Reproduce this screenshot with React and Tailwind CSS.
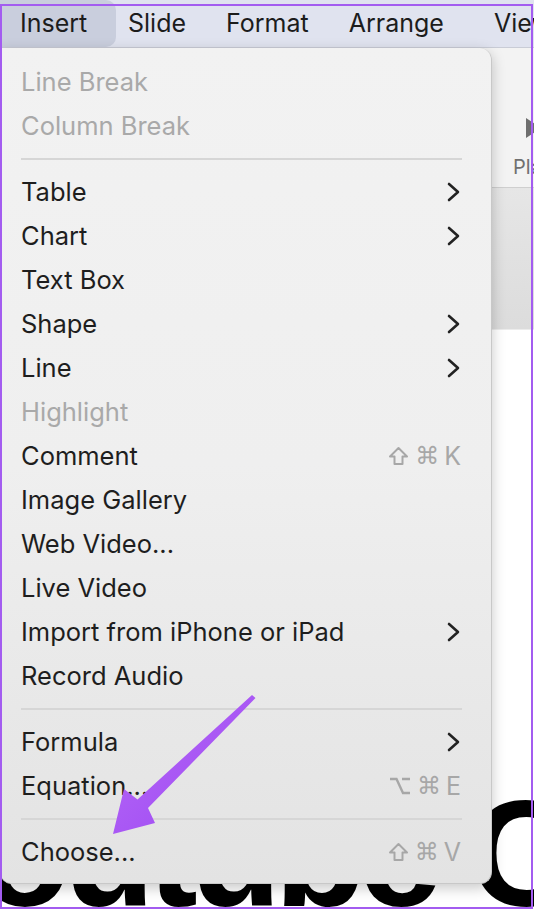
import React from 'react';

// Menu rows, top to bottom. 'sep' draws a divider.
const menuItems = [
  { label: 'Line Break', disabled: true },
  { label: 'Column Break', disabled: true },
  'sep',
  { label: 'Table', submenu: true },
  { label: 'Chart', submenu: true },
  { label: 'Text Box' },
  { label: 'Shape', submenu: true },
  { label: 'Line', submenu: true },
  { label: 'Highlight', disabled: true },
  { label: 'Comment', mod: 'shift', key: 'K' },
  { label: 'Image Gallery' },
  { label: 'Web Video...' },
  { label: 'Live Video' },
  { label: 'Import from iPhone or iPad', submenu: true },
  { label: 'Record Audio' },
  'sep',
  { label: 'Formula', submenu: true },
  { label: 'Equation...', mod: 'option', key: 'E' },
  'sep',
  { label: 'Choose...', mod: 'shift', key: 'V' },
];

const fontStack = { fontFamily: 'Inter, "Noto Sans", sans-serif' };

const Chevron = () => (
  <svg width="14" height="20" viewBox="0 0 14 20" className="shrink-0">
    <polyline points="2,2 11,10 2,18" fill="none" stroke="#222" strokeWidth="2.6" strokeLinecap="round" strokeLinejoin="round" />
  </svg>
);

const ShiftIcon = () => (
  <svg width="21" height="20" viewBox="0 0 21 20">
    <path d="M10.5 2 L19 10.5 L14.5 10.5 L14.5 18 L6.5 18 L6.5 10.5 L2 10.5 Z" fill="none" stroke="#a7a7a7" strokeWidth="2" strokeLinejoin="round" />
  </svg>
);

const OptionIcon = () => (
  <svg width="22" height="20" viewBox="0 0 22 20">
    <path d="M1 3 H7.5 L14 17 H21 M13 3 H21" fill="none" stroke="#a7a7a7" strokeWidth="2.4" />
  </svg>
);

const Shortcut = ({ mod, k }) => (
  <div className="flex items-center text-[#a7a7a7]">
    {mod === 'shift' ? <ShiftIcon /> : <OptionIcon />}
    <span className="ml-[6px] text-[24px] leading-none" style={{ fontFamily: '"DejaVu Sans", sans-serif' }}>⌘</span>
    <span className="ml-[5px] text-[25px] leading-none">{k}</span>
  </div>
);

const MenuRow = ({ item }) => (
  <div className="flex items-center justify-between h-[44px] pl-[21px] pr-[30px]">
    <span className={'text-[25.5px] leading-none ' + (item.disabled ? 'text-[#a9a9a9]' : 'text-[#1e1e1e]')}>
      {item.label}
    </span>
    {item.submenu && <Chevron />}
    {item.mod && <Shortcut mod={item.mod} k={item.key} />}
  </div>
);

const Separator = () => (
  <div className="flex items-center h-[22px] pl-[21px] pr-[29px]">
    <div className="w-full h-[2px] bg-[#d6d6d6]" />
  </div>
);

export default function App() {
  return (
    <div className="relative w-[534px] h-[910px] overflow-hidden bg-white flex flex-col" style={fontStack}>
      {/* menu bar */}
      <div className="h-[48px] shrink-0 flex items-stretch bg-[#e0e3ef] border-b border-[#c9ccd6] text-[25px] text-[#1c1c1c] whitespace-nowrap">
        <div className="shrink-0 w-[116px] pl-[20px] flex items-center bg-[#c9cedd] rounded-r-[10px]">Insert</div>
        <div className="shrink-0 ml-[12px] pr-[40px] flex items-center">Slide</div>
        <div className="shrink-0 pr-[40px] flex items-center">Format</div>
        <div className="shrink-0 pr-[50px] flex items-center">Arrange</div>
        <div className="shrink-0 flex items-center">View</div>
      </div>

      {/* toolbar behind the menu */}
      <div className="h-[140px] shrink-0 bg-[#f3f3f3] border-b border-[#cfcfcf] pt-[69px] pl-[513px]">
        <div className="flex flex-col items-center w-[40px]">
          <svg width="18" height="22" viewBox="0 0 18 22">
            <path d="M2 1 L17 11 L2 21 Z" fill="#6e6e6e" strokeLinejoin="round" />
          </svg>
          <span className="mt-[18px] text-[20px] leading-none text-[#707070] whitespace-nowrap">Play</span>
        </div>
      </div>

      {/* grey strip */}
      <div className="h-[142px] shrink-0 bg-linear-to-b from-[#e6e6e6] to-[#dcdcdc] border-b border-[#ececec]" />

      {/* slide canvas */}
      <div className="flex-1 bg-white pt-[449px]">
        <div
          className="ml-[-102px] whitespace-nowrap text-[150px] leading-none font-bold text-black tracking-[-0.05em]"
          style={{ fontFamily: '"Liberation Sans", Arial, sans-serif' }}
        >
          Youtube Channel
        </div>
      </div>

      {/* Insert menu */}
      <div className="absolute left-0 top-[48px] w-[492px] h-[836px] pt-[12px] rounded-tr-[12px] rounded-b-[12px] bg-linear-to-b from-[#f2f2f2] via-[#efefef] to-[#e3e3e3] border border-l-0 border-t-0 border-[#c8c8c8] shadow-[0_4px_14px_rgba(0,0,0,0.22)]">
        {menuItems.map((item, i) =>
          item === 'sep' ? <Separator key={i} /> : <MenuRow key={i} item={item} />
        )}
      </div>

      {/* purple annotation arrow */}
      <svg className="absolute left-0 top-0 pointer-events-none" width="534" height="910" viewBox="0 0 534 910">
        <defs>
          <linearGradient id="arrowFill" x1="0" y1="0" x2="1" y2="1">
            <stop offset="0" stopColor="#b86cf7" />
            <stop offset="1" stopColor="#9b45f2" />
          </linearGradient>
        </defs>
        <polygon
          points="252,695 255.5,698 148,808 155,823 113,834 124,789 137.5,799.5"
          fill="url(#arrowFill)"
          strokeLinejoin="round"
        />
      </svg>

      {/* screenshot frame */}
      <div className="absolute left-0 top-[4px] w-[533px] h-[905px] border-2 border-[#a35cf0] pointer-events-none" />
    </div>
  );
}
